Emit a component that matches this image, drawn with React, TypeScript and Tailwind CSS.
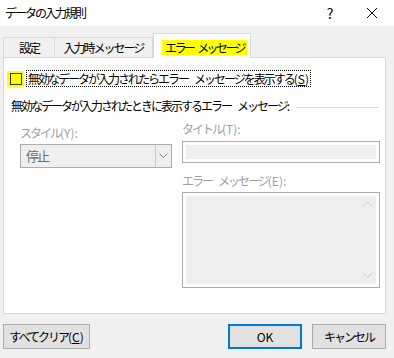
import React from 'react';

const FONT = { fontFamily: '"Noto Sans CJK JP", "Noto Sans", sans-serif' };

// Japanese run, squeezed to the proportional width of the dialog font
function J({ children, tight }: { children: React.ReactNode; tight?: boolean }) {
  return <span className={tight ? 'tracking-[-2.6px]' : 'tracking-[-2px]'}>{children}</span>;
}

function Gap() {
  return <span className="inline-block w-[6px]" />;
}

function ChevronDown({ className }: { className?: string }) {
  return (
    <svg width="9" height="6" viewBox="0 0 9 6" className={className}>
      <path d="M0.5 0.5 L4.5 4.5 L8.5 0.5" fill="none" stroke="currentColor" strokeWidth="1" />
    </svg>
  );
}

function ChevronUp({ className }: { className?: string }) {
  return (
    <svg width="9" height="6" viewBox="0 0 9 6" className={className}>
      <path d="M0.5 5 L4.5 1 L8.5 5" fill="none" stroke="currentColor" strokeWidth="1" />
    </svg>
  );
}

export default function App() {
  return (
    <div className="w-[394px] h-[358px] bg-[#f0f0f0] flex flex-col text-[12px] text-black overflow-hidden whitespace-nowrap" style={FONT}>
      {/* title bar */}
      <div className="h-[26px] bg-white flex items-center pl-[5px] shrink-0">
        <span className="flex-1 leading-none"><J>データの入力規則</J></span>
        <span className="w-[20px] text-center text-[14px] leading-none mr-[26px]">?</span>
        <svg width="12" height="12" viewBox="0 0 12 12" className="mr-[16px]">
          <path d="M1 1 L11 11 M11 1 L1 11" stroke="#000" strokeWidth="1" />
        </svg>
      </div>

      <div className="flex-1 flex flex-col px-[3px] pt-[7px]">
        {/* tabs */}
        <div className="flex items-end h-[24px] relative z-10">
          <div className="h-[20px] w-[52px] border border-[#d9d9d9] border-b-0 bg-[#f0f0f0] flex items-center justify-center"><J>設定</J></div>
          <div className="h-[20px] w-[98px] border border-[#d9d9d9] border-b-0 border-l-0 bg-[#f0f0f0] flex items-center justify-center"><J>入力時メッセージ</J></div>
          <div className="h-[25px] w-[98px] border border-[#d9d9d9] border-b-0 bg-white flex items-start pl-[8px] pt-[6px] -mb-px">
            <span className="bg-[#ffff00] leading-[15px] h-[15px] pl-[3px] pr-[3px]"><J tight>エラー</J><span className="inline-block w-[4px]" /><J tight>メッセージ</J></span>
          </div>
        </div>

        {/* panel */}
        <div className="w-[383px] h-[257px] bg-white border border-[#d9d9d9] flex flex-col">
          <div className="flex items-center pl-[3px] pt-[12px]">
            <div className="bg-[#ffff00] w-[17px] h-[16px] flex items-center justify-center">
              <div className="w-[12px] h-[12px] border border-[#333] bg-[#ffff00]" />
            </div>
            <span className="ml-[2px] border border-dotted border-black px-[1px] leading-[15px]">
              <J>無効なデータが入力されたらエラー</J><Gap /><J>メッセージを表示する</J>(<span className="underline">S</span>)
            </span>
          </div>

          <div className="flex items-center pl-[7px] pr-[6px] mt-[13px]">
            <span className="leading-none"><J>無効なデータが入力されたときに表示するエラー</J><Gap /><J>メッセージ</J>:</span>
            <div className="flex-1 h-px bg-[#dcdcdc] ml-[6px] mt-[2px]" />
          </div>

          <div className="flex pl-[16px] mt-[11px] gap-[10px] text-[#a0a0a0]">
            <div className="w-[152px] flex flex-col">
              <span className="leading-none mt-[4px]"><J>スタイル</J>(Y):</span>
              <div className="mt-[5px] h-[24px] border border-[#adadad] bg-[#efefef] flex items-center">
                <span className="flex-1 pl-[5px] text-[#6d6d6d] text-[13px]"><J>停止</J></span>
                <div className="w-[16px] h-full border-l border-[#c8c8c8] flex items-center justify-center text-[#808080]">
                  <ChevronDown />
                </div>
              </div>
            </div>
            <div className="w-[198px] flex flex-col">
              <span className="leading-none"><J>タイトル</J>(T):</span>
              <div className="mt-[6px] h-[22px] border border-[#adadad] bg-white p-[3px]">
                <div className="w-full h-full bg-[#efefef]" />
              </div>
              <span className="leading-none mt-[12px]"><J>エラー</J><Gap /><J>メッセージ</J>(E):</span>
              <div className="mt-[5px] h-[96px] border border-[#adadad] bg-white p-[3px] flex">
                <div className="flex-1 bg-[#efefef]" />
                <div className="w-[17px] bg-[#efefef] flex flex-col items-center justify-between py-[5px] text-[#c8c8c8]">
                  <ChevronUp />
                  <ChevronDown />
                </div>
              </div>
            </div>
          </div>
        </div>

        {/* buttons */}
        <div className="flex mt-[10px]">
          <div className="w-[87px] h-[25px] border border-[#adadad] bg-[#e1e1e1] flex items-center justify-center">
            <J>すべてクリア</J>(<span className="underline">C</span>)
          </div>
          <div className="flex-1" />
          <div className="w-[74px] h-[25px] border-2 border-[#0078d7] bg-[#e1e1e1] flex items-center justify-center">OK</div>
          <div className="w-[74px] h-[25px] ml-[10px] mr-[5px] border border-[#adadad] bg-[#e1e1e1] flex items-center justify-center"><J>キャンセル</J></div>
        </div>
      </div>
    </div>
  );
}
